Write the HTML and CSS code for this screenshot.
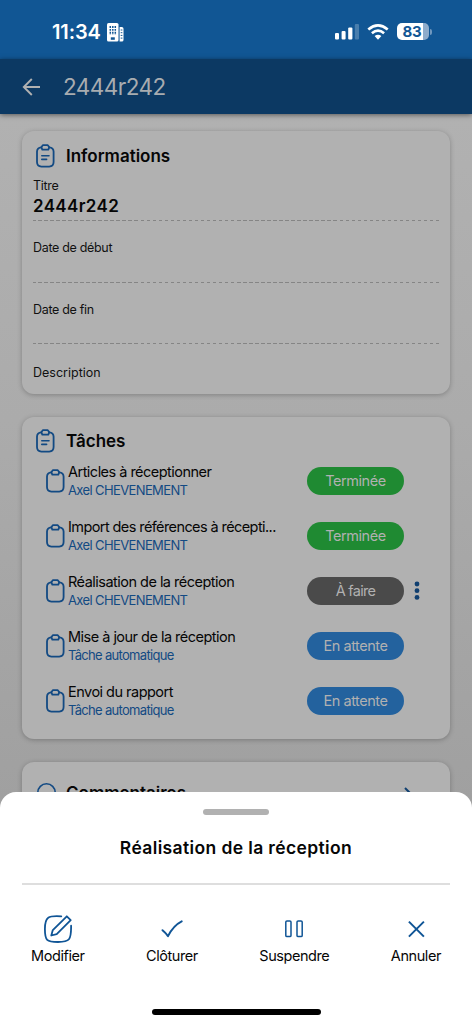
FILE: index.html
```
<!DOCTYPE html>
<html lang="fr">
<head>
<meta charset="utf-8">
<title>2444r242</title>
<link rel="stylesheet" href="styles.css">
</head>
<body>
<svg class="defs" width="0" height="0">
  <symbol id="clip" viewBox="0 0 19 24"><g fill="none" stroke="currentColor" stroke-width="1.8" stroke-linecap="round" stroke-linejoin="round"><path d="M5.3 3.4C2.2 3.6 1.1 4.8 1 7.6v10.5c0 3.2 1.2 4.4 4.4 4.5h7.800c3.200-.1 4.400-1.300 4.400-4.500V7.600c-.1-2.800-1.200-4-4.300-4.200"/><path d="M6.800 1.200h5l1.500 2-1 2.400H6.300l-1-2.400z"/></g></symbol>
  <symbol id="note" viewBox="0 0 19 24"><use href="#clip"/><path d="M5.800 11.800h7.200M5.800 15.400h4.800" fill="none" stroke="currentColor" stroke-width="1.600" stroke-linecap="round"/></symbol>
</svg>
<div class="screen">
  <div class="status">
    <span class="time">11:34</span>
    <svg class="building" width="17" height="19" viewBox="0 0 17 19"><rect width="11.500" height="18.600" rx="1.600" fill="#fff"/><path d="M12.600 4h2.200q1.700 0 1.700 1.700v11.200q0 1.700-1.700 1.700h-2.200z" fill="#fff"/><path d="M3.300 3v9M5.800 3v9M8.300 3v9" stroke="#115694" stroke-width="1.500" stroke-dasharray="1.900 1"/><path d="M3.800 14.300h4v2.500h-4z" fill="#115694"/><path d="M13.700 7h1.700M13.700 9.700h1.700M13.700 12.400h1.700M13.700 15.100h1.700" stroke="#115694"/></svg>
    <svg class="signal" width="25" height="16" viewBox="0 0 25 16" fill="#fff"><rect y="9" width="4" height="6.500" rx="1.100"/><rect x="6.600" y="7" width="4" height="8.500" rx="1.100"/><rect x="13.200" y="3.500" width="4.200" height="12" rx="1.100"/><rect x="19.800" width="4.200" height="15.500" rx="1.100" opacity=".24"/></svg>
    <svg class="wifi" width="22" height="16" viewBox="0 0 22 16"><g fill="none" stroke="#fff" stroke-width="2.700"><path d="M1.300 5.500Q11-2.700 20.700 5.500"/><path d="M4.900 9.200Q11 4.200 17.100 9.200"/></g><path d="M7.600 12Q11 9.300 14.400 12L11 15.700z" fill="#fff"/></svg>
    <div class="battery"><span>83</span></div><i class="nub"></i>
  </div>
  <header class="bar">
    <svg width="19" height="18" viewBox="0 0 19 18" fill="none" stroke="#b1b1b1" stroke-width="1.900"><path d="M18 9H1.800M9.800 1L1.800 9l8 8"/></svg>
    <h1>2444r242</h1>
  </header>
  <main class="page">
    <section class="card info">
      <h2><svg class="ico" width="19" height="24"><use href="#note"/></svg><span>Informations</span></h2>
      <div class="field first"><span class="lab">Titre</span><b>2444r242</b></div>
      <div class="field"><span class="lab">Date de début</span></div>
      <div class="field"><span class="lab">Date de fin</span></div>
      <div class="field last"><span class="lab">Description</span></div>
    </section>
    <section class="card tasks">
      <h2><svg class="ico" width="19" height="24"><use href="#note"/></svg><span>Tâches</span></h2>
      <div class="task"><svg class="ico" width="19" height="24"><use href="#clip"/></svg><div class="txt"><p>Articles à réceptionner</p><small>Axel CHEVENEMENT</small></div><span class="pill done">Terminée</span></div>
      <div class="task"><svg class="ico" width="19" height="24"><use href="#clip"/></svg><div class="txt"><p class="long">Import des références à récepti...</p><small>Axel CHEVENEMENT</small></div><span class="pill done">Terminée</span></div>
      <div class="task"><svg class="ico" width="19" height="24"><use href="#clip"/></svg><div class="txt"><p>Réalisation de la réception</p><small>Axel CHEVENEMENT</small></div><span class="pill todo">À faire</span><svg class="more" width="6" height="20" fill="#103f70"><circle cx="3" cy="3" r="2.400"/><circle cx="3" cy="9.700" r="2.400"/><circle cx="3" cy="16.400" r="2.400"/></svg></div>
      <div class="task"><svg class="ico" width="19" height="24"><use href="#clip"/></svg><div class="txt"><p>Mise à jour de la réception</p><small class="auto">Tâche automatique</small></div><span class="pill wait">En attente</span></div>
      <div class="task"><svg class="ico" width="19" height="24"><use href="#clip"/></svg><div class="txt"><p>Envoi du rapport</p><small class="auto">Tâche automatique</small></div><span class="pill wait">En attente</span></div>
    </section>
    <section class="card comments">
      <h2><svg class="ico" width="19" height="24" viewBox="0 0 19 24"><circle cx="9.500" cy="11.500" r="8.700" fill="none" stroke="currentColor" stroke-width="1.600"/></svg><span>Commentaires</span><svg class="chev" width="11" height="18" viewBox="0 0 11 18" fill="none" stroke="#103f70" stroke-width="2"><path d="M1 1l8 8-8 8"/></svg></h2>
    </section>
  </main>
  <div class="sheet">
    <div class="grip"></div>
    <h3>Réalisation de la réception</h3>
    <div class="actions">
      <div class="act"><svg width="28" height="28" viewBox="0 0 28 28" fill="none" stroke="#105596" stroke-width="1.800" stroke-linecap="round" stroke-linejoin="round"><path d="M17.300 1.300C4.300.4.900 1.700.900 14c0 11.500 1.800 13 13.100 13 11.500 0 13.300-1.800 13.100-16.300"/><path d="M22.800 1.300l3.900 3.900-14 13.900L7.300 20.500l1.500-5.400z"/></svg><span>Modifier</span></div>
      <div class="act"><svg width="28" height="28" viewBox="0 0 28 28" fill="none" stroke="#105596" stroke-width="2" stroke-linecap="round" stroke-linejoin="round"><path d="M4.500 15.200q3 2.400 5.500 5.900Q15.500 10.500 23.700 6.400"/></svg><span>Clôturer</span></div>
      <div class="act"><svg width="28" height="28" viewBox="0 0 28 28" fill="none" stroke="#105596" stroke-width="1.500"><rect x="5.800" y="5.900" width="5.200" height="15.700" rx="1.200"/><rect x="17" y="5.900" width="5.200" height="15.700" rx="1.200"/></svg><span>Suspendre</span></div>
      <div class="act"><svg width="28" height="28" viewBox="0 0 28 28" fill="none" stroke="#105596" stroke-width="2"><path d="M6.900 6.600l15 15M21.900 6.600l-15 15"/></svg><span>Annuler</span></div>
    </div>
    <div class="home"></div>
  </div>
</div>
</body>
</html>
```
FILE: styles.css
```
* { box-sizing: border-box; }
body { margin: 0; font-family: Inter, "Liberation Sans", sans-serif; color: #060606; }
h1, h2, h3, p { margin: 0; white-space: nowrap; }
svg { display: block; flex: none; }
.defs { position: absolute; }
.screen { position: relative; width: 472px; height: 1024px; overflow: hidden; background: linear-gradient(#b1b1b1 114px, #ababab 420px, #a0a0a0 800px); }
.status { height: 59px; background: #115694; display: flex; align-items: flex-start; color: #fff; }
.time { margin-left: 52px; width: 50px; margin-top: 20px; font-size: 20px; line-height: 24px; font-weight: 600; letter-spacing: -0.100px; }
.building { margin: 23px 0 0 5px; }
.signal { margin: 24px 0 0 211px; }
.wifi { margin: 24px 0 0 7px; }
.battery { margin: 23px 0 0 8px; width: 32px; height: 17px; padding-right: 2px; border-radius: 5px; background: linear-gradient(90deg, #fff 26px, #8eaccb 26px); color: #115694; font-weight: 700; font-size: 15px; line-height: 17px; letter-spacing: -0.300px; text-align: center; }
.nub { width: 2px; height: 6px; margin: 29px 0 0 1px; border-radius: 0 2px 2px 0; background: #7098bf; }
.bar { position: relative; height: 55px; background: #0c3963; display: flex; align-items: center; padding-left: 22px; box-shadow: 0 1px 5px rgba(0,0,0,.5); }
.bar h1 { margin-left: 22px; font-size: 22.500px; line-height: 28px; font-weight: 400; color: #a8acb0; letter-spacing: -0.550px; }
.page { padding: 17px 22px 0; display: flex; flex-direction: column; gap: 23px; }
.card { background: #b1b1b1; border-radius: 12px; box-shadow: 0 1px 5px rgba(0,0,0,.25); padding: 0 11px; }
.info { height: 263px; padding-top: 12px; }
.tasks { height: 322px; padding-top: 11px; }
.comments { height: 80px; padding-top: 18px; }
.ico { color: #134a83; }
.card h2 { display: flex; align-items: center; gap: 10px; padding-left: 4px; height: 26px; font-size: 17px; font-weight: 600; }
.info h2 .ico, .tasks h2 .ico { margin: -1px 0 0 -1px; }
.info h2 span, .tasks h2 span { margin-left: 1px; }
.field { height: 61.500px; border-bottom: 1px solid transparent; border-image: repeating-linear-gradient(90deg, #858585 0 3.500px, transparent 3.500px 6px) 1; padding-top: 20px; }
.field.first { height: 52px; padding-top: 10px; }
.field.last { border: 0; padding-top: 22px; }
.lab { display: block; font-size: 12.500px; line-height: 14px; white-space: nowrap; color: #111; letter-spacing: -0.320px; }
.last .lab { letter-spacing: 0; }
.field b { display: block; font-size: 17px; line-height: 20px; font-weight: 600; margin-top: 3px; letter-spacing: 0.350px; }
.task { height: 55px; display: flex; align-items: flex-start; padding-left: 13px; }
.task .ico { margin-top: 15px; }
.txt { margin: 9px 0 0 3px; width: 239px; }
.txt p { font-size: 14.500px; line-height: 18px; letter-spacing: -0.520px; }
.txt p.long { letter-spacing: -0.590px; }
.txt small { display: block; font-size: 13px; line-height: 18px; color: #134a83; letter-spacing: -0.620px; white-space: nowrap; }
.txt small.auto { letter-spacing: -0.690px; }
.pill { width: 97px; height: 28px; margin-top: 13px; border-radius: 14px; color: #b1b1b1; font-size: 14.500px; line-height: 28px; letter-spacing: -0.450px; text-align: center; }
.done { background: #1f8a32; }
.todo { background: #4a4a4a; letter-spacing: -0.700px; }
.wait { background: #23629e; }
.more { margin: 17px 0 0 10px; }
.chev { margin: 5px 24px 0 auto; }
.sheet { position: absolute; inset: 792px 0 0; background: #fff; border-radius: 16px 16px 0 0; padding: 17px 22px 0; display: flex; flex-direction: column; align-items: center; }
.grip { width: 66px; height: 6px; border-radius: 3px; background: #b1b1b1; }
.sheet h3 { margin-top: 21px; font-size: 17.500px; line-height: 24px; font-weight: 600; letter-spacing: 0.370px; }
.actions { align-self: stretch; margin-top: 23px; border-top: 2px solid #dedede; padding: 30px 9px 0; display: flex; justify-content: space-between; height: 127px; }
.act { display: flex; flex-direction: column; align-items: center; gap: 3px; font-size: 14.500px; line-height: 20px; letter-spacing: -0.430px; }
.home { width: 169px; height: 6px; border-radius: 3px; background: #000; margin-top: -1px; }
```
